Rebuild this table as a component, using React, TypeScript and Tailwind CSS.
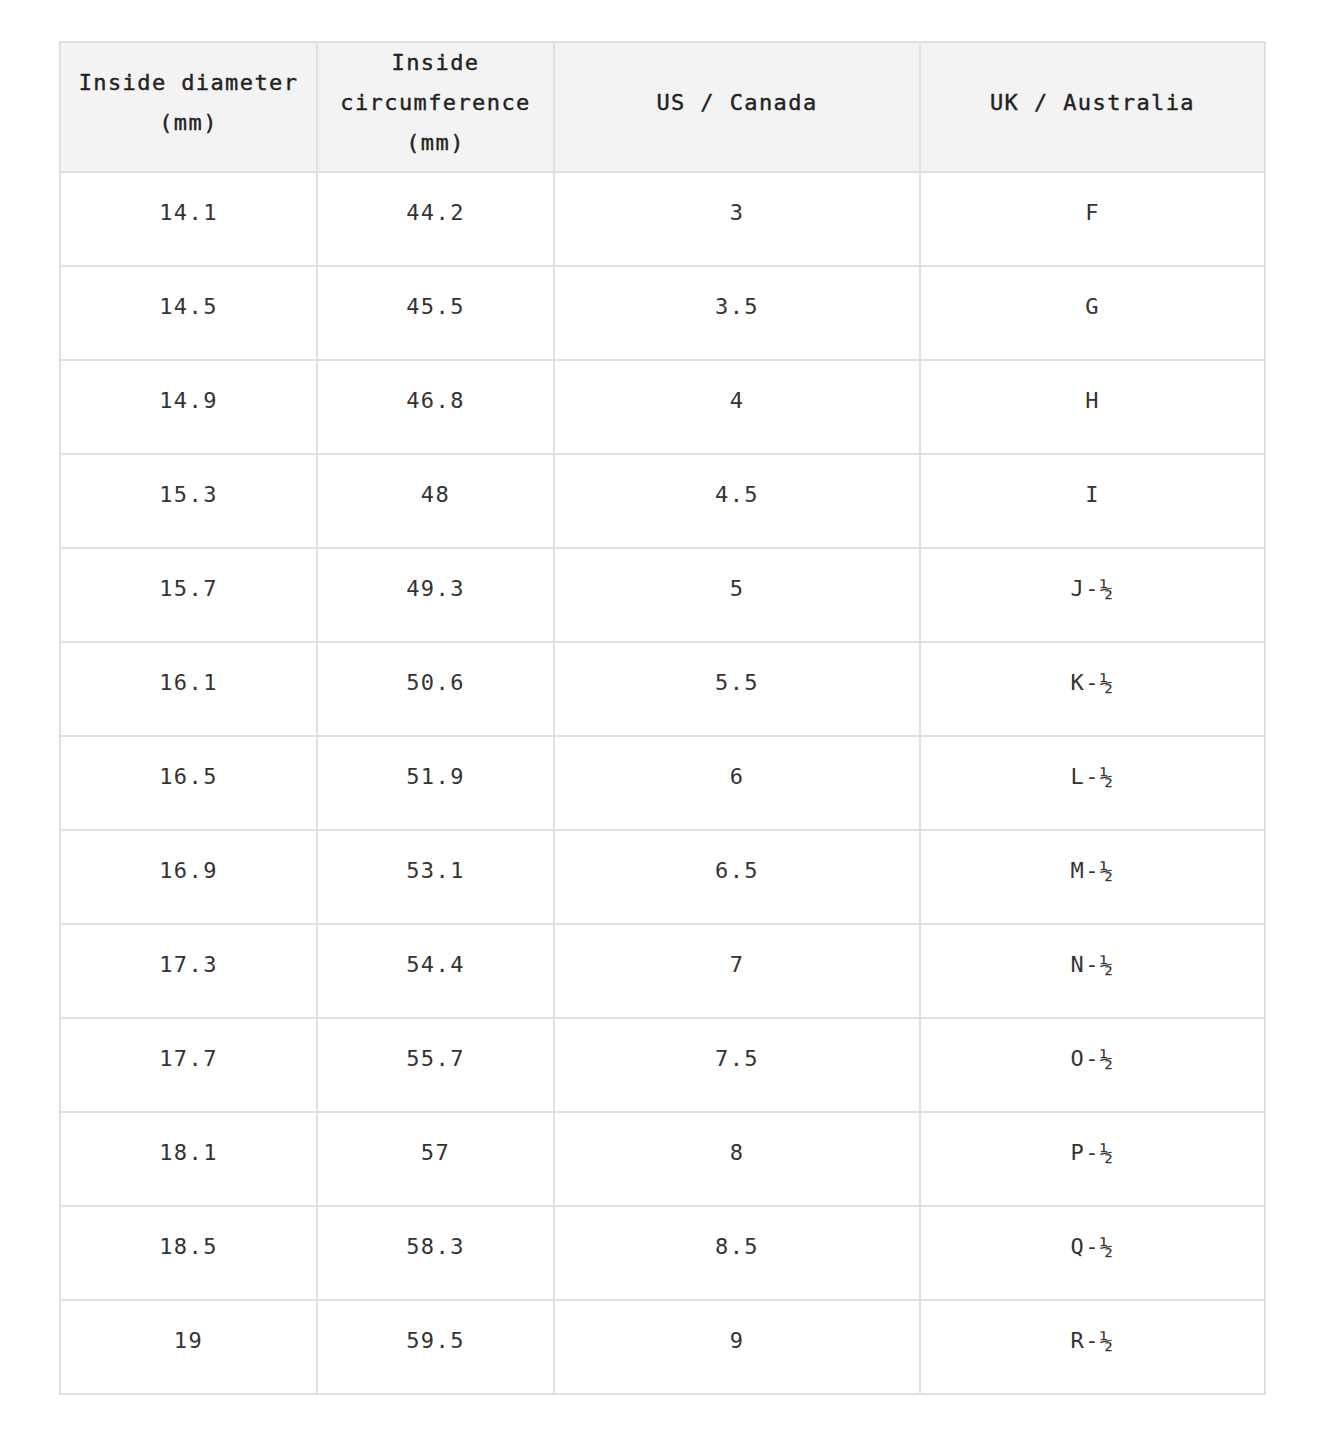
const rows: [string, string, string, string][] = [
  ['14.1', '44.2', '3', 'F'],
  ['14.5', '45.5', '3.5', 'G'],
  ['14.9', '46.8', '4', 'H'],
  ['15.3', '48', '4.5', 'I'],
  ['15.7', '49.3', '5', 'J-½'],
  ['16.1', '50.6', '5.5', 'K-½'],
  ['16.5', '51.9', '6', 'L-½'],
  ['16.9', '53.1', '6.5', 'M-½'],
  ['17.3', '54.4', '7', 'N-½'],
  ['17.7', '55.7', '7.5', 'O-½'],
  ['18.1', '57', '8', 'P-½'],
  ['18.5', '58.3', '8.5', 'Q-½'],
  ['19', '59.5', '9', 'R-½'],
];

const headers = ['Inside diameter (mm)', 'Inside circumference (mm)', 'US / Canada', 'UK / Australia'];

export default function App() {
  return (
    <div className="min-h-[1452px] bg-white pt-[41px] pl-[59px]">
      <table className="w-[1207px] table-fixed border-collapse border-2 border-[#e0e0e0] font-['DejaVu_Sans_Mono',monospace] text-[22px] tracking-[1.4px] text-[#333]">
        <colgroup>
          <col className="w-[257px]" />
          <col className="w-[237px]" />
          <col className="w-[366px]" />
          <col className="w-[345px]" />
        </colgroup>
        <thead>
          <tr className="bg-[#f3f3f3]">
            {headers.map((h) => (
              <th
                key={h}
                className="border-2 border-[#e0e0e0] px-2 pt-0 pb-[8px] text-center align-middle font-normal leading-[40px] text-[#222] [-webkit-text-stroke:0.4px_#222]"
              >
                {h}
              </th>
            ))}
          </tr>
        </thead>
        <tbody>
          {rows.map((r) => (
            <tr key={r[0]}>
              {r.map((c, i) => (
                <td key={i} className="border-2 border-[#e0e0e0] px-2 pt-[20px] pb-[32px] text-center align-middle leading-[40px]">
                  {c}
                </td>
              ))}
            </tr>
          ))}
        </tbody>
      </table>
    </div>
  );
}
